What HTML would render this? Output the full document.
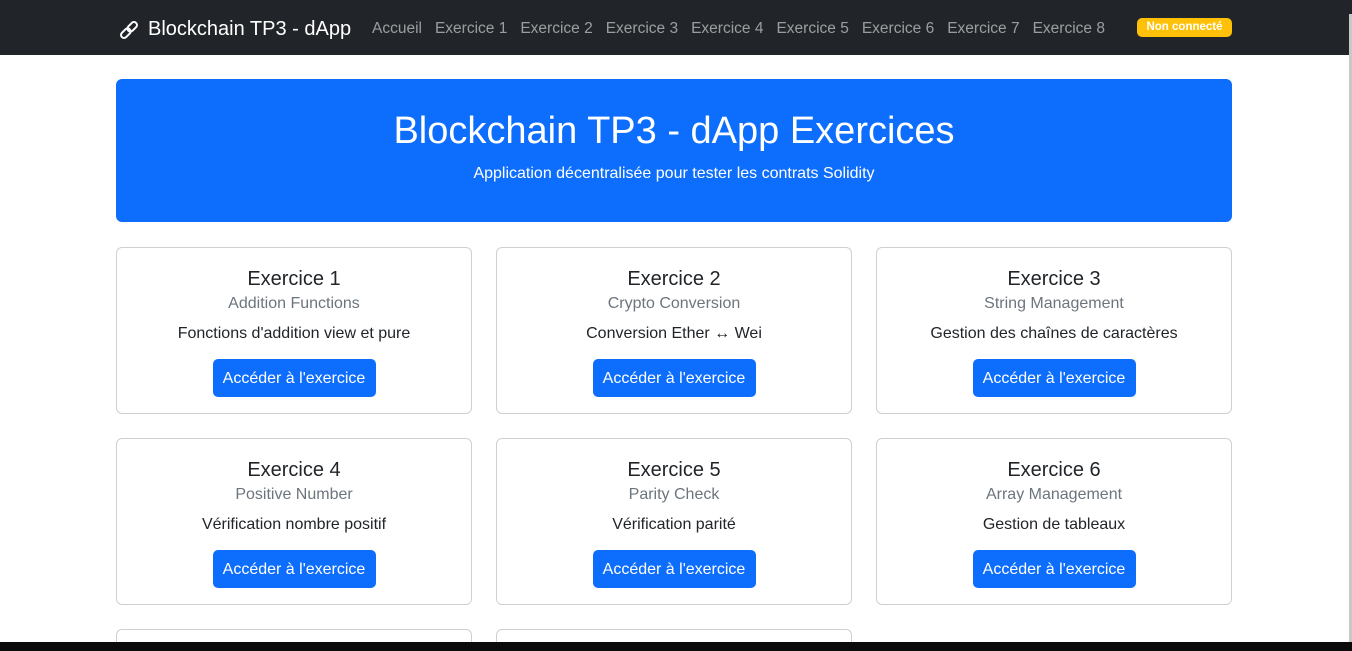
<!DOCTYPE html>
<html><head><meta charset="utf-8"><style>
*{box-sizing:border-box;margin:0;padding:0}
html,body{width:1352px;height:651px;overflow:hidden}
body{background:#fff;font-family:"Liberation Sans",sans-serif;color:#212529;position:relative}
nav{position:absolute;left:0;top:0;width:1352px;height:55px;background:#212529}
.brand{position:absolute;left:118px;top:18px;color:#fff;font-size:20px;display:flex;align-items:center;gap:8px;white-space:nowrap}
.links{position:absolute;left:372px;top:20px;font-size:15.5px;color:rgba(255,255,255,.55);white-space:nowrap}
.links span{margin-right:13px}
.badge{position:absolute;left:1137px;top:18px;width:95px;height:19px;background:#ffc107;color:#fff;border-radius:5px;font-size:11.5px;font-weight:bold;text-align:center;line-height:19px}
.sb{position:absolute;right:0;top:14px;width:3px;height:628px;background:#c8c8c8}
.jumbo{position:absolute;left:116px;top:79px;width:1116px;height:143px;background:#0d6efd;border-radius:6px;color:#fff;text-align:center}
.jumbo h1{font-weight:normal;font-size:38px;margin-top:30px;line-height:44px}
.jumbo p{font-size:16px;margin-top:12px}
.card{position:absolute;width:356px;height:167px;border:1px solid #d0d0d0;border-radius:6px;text-align:center}
.card.s{height:13px;border-bottom:none;border-radius:6px 6px 0 0}
.card h5{font-weight:normal;font-size:20px;margin-top:19px;line-height:24px}
.card h6{font-weight:normal;font-size:16px;color:#6c757d;margin-top:3px;line-height:20px}
.card p{font-size:16px;margin-top:10px;line-height:20px}
.btn{display:inline-block;margin-top:15px;width:163px;height:38px;background:#0d6efd;color:#fff;border-radius:5px;font-size:16px;line-height:40px}
.task{position:absolute;left:0;top:642px;width:1352px;height:9px;background:#0b0b0b}
</style></head><body>
<nav>
<div class="brand"><svg width="22" height="22" viewBox="0 0 22 22" fill="none" stroke="#fff" stroke-width="2"><g transform="rotate(-45 11 11)"><rect x="1" y="8" width="11" height="6" rx="3"/><rect x="10" y="8" width="11" height="6" rx="3"/></g></svg>Blockchain TP3 - dApp</div>
<div class="links"><span>Accueil</span><span>Exercice 1</span><span>Exercice 2</span><span>Exercice 3</span><span>Exercice 4</span><span>Exercice 5</span><span>Exercice 6</span><span>Exercice 7</span><span>Exercice 8</span></div>
<div class="badge">Non connecté</div>
</nav>
<div class="sb"></div>
<div class="jumbo"><h1>Blockchain TP3 - dApp Exercices</h1><p>Application décentralisée pour tester les contrats Solidity</p></div>
<div class="card" style="left:116px;top:247px"><h5>Exercice 1</h5><h6>Addition Functions</h6><p>Fonctions d'addition view et pure</p><span class="btn">Accéder à l'exercice</span></div>
<div class="card" style="left:496px;top:247px"><h5>Exercice 2</h5><h6>Crypto Conversion</h6><p>Conversion Ether ↔ Wei</p><span class="btn">Accéder à l'exercice</span></div>
<div class="card" style="left:876px;top:247px"><h5>Exercice 3</h5><h6>String Management</h6><p>Gestion des chaînes de caractères</p><span class="btn">Accéder à l'exercice</span></div>
<div class="card" style="left:116px;top:438px"><h5>Exercice 4</h5><h6>Positive Number</h6><p>Vérification nombre positif</p><span class="btn">Accéder à l'exercice</span></div>
<div class="card" style="left:496px;top:438px"><h5>Exercice 5</h5><h6>Parity Check</h6><p>Vérification parité</p><span class="btn">Accéder à l'exercice</span></div>
<div class="card" style="left:876px;top:438px"><h5>Exercice 6</h5><h6>Array Management</h6><p>Gestion de tableaux</p><span class="btn">Accéder à l'exercice</span></div>
<div class="card s" style="left:116px;top:629px"></div>
<div class="card s" style="left:496px;top:629px"></div>
<div class="task"></div>
</body></html>
